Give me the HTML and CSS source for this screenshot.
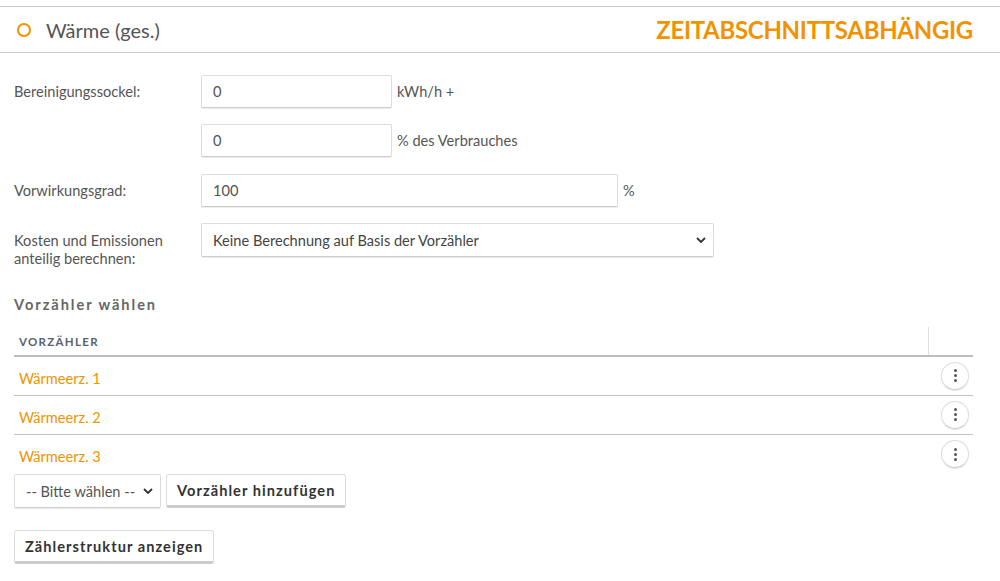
FILE: index.html
```html
<!DOCTYPE html>
<html lang="de">
<head>
<meta charset="utf-8">
<link rel="stylesheet" href="styles.css">
</head>
<body>
<div class="panel">
  <div class="panel-head">
    <div class="title">
      <span class="ring"></span>
      <span class="title-text">Wärme (ges.)</span>
    </div>
    <div class="mode">ZEITABSCHNITTSABHÄNGIG</div>
  </div>

  <div class="form">
    <div class="row">
      <label class="lbl">Bereinigungssockel:</label>
      <div class="ctrl"><input class="inp w-short" value="0"><span class="unit">kWh/h +</span></div>
    </div>
    <div class="row">
      <label class="lbl"></label>
      <div class="ctrl"><input class="inp w-short" value="0"><span class="unit">% des Verbrauches</span></div>
    </div>
    <div class="row">
      <label class="lbl">Vorwirkungsgrad:</label>
      <div class="ctrl"><input class="inp w-mid" value="100"><span class="unit">%</span></div>
    </div>
    <div class="row row-top">
      <label class="lbl lbl-multi">Kosten und Emissionen anteilig berechnen:</label>
      <div class="ctrl">
        <div class="sel w-long"><span>Keine Berechnung auf Basis der Vorzähler</span><svg class="chev" viewBox="0 0 10 6"><path d="M1 1l4 4 4-4" fill="none" stroke="#333" stroke-width="1.8"/></svg></div>
      </div>
    </div>
  </div>

  <h3 class="section">Vorzähler wählen</h3>

  <div class="table">
    <div class="thead">
      <div class="th">VORZÄHLER</div>
      <div class="th th-act"></div>
    </div>
    <div class="tr"><a class="meter">Wärmeerz. 1</a><span class="kebab"><i></i><i></i><i></i></span></div>
    <div class="tr"><a class="meter">Wärmeerz. 2</a><span class="kebab"><i></i><i></i><i></i></span></div>
    <div class="tr last"><a class="meter">Wärmeerz. 3</a><span class="kebab"><i></i><i></i><i></i></span></div>
  </div>

  <div class="add">
    <div class="sel sel-small"><span>-- Bitte wählen --</span><svg class="chev" viewBox="0 0 10 6"><path d="M1 1l4 4 4-4" fill="none" stroke="#333" stroke-width="1.8"/></svg></div>
    <button class="btn">Vorzähler hinzufügen</button>
  </div>

  <div class="struct">
    <button class="btn">Zählerstruktur anzeigen</button>
  </div>
</div>
</body>
</html>
```

FILE: styles.css
```css
* { box-sizing: border-box; }
body {
  margin: 0;
  font-family: Lato, "Open Sans", sans-serif;
  font-size: 14.6px;
  color: #555;
  background: #fff;
}
.panel { padding-top: 6px; }
.panel-head {
  height: 47px;
  border-top: 1px solid #c8c8c8;
  border-bottom: 1px solid #c8c8c8;
  display: flex;
  align-items: center;
  justify-content: space-between;
  padding: 0 27px 0 17px;
}
.title { display: flex; align-items: center; gap: 15px; }
.ring {
  width: 14px; height: 14px;
  border: 2.4px solid #f39200;
  border-radius: 50%;
}
.title-text { font-size: 20px; color: #555; }
.mode {
  font-size: 24px;
  font-weight: 700;
  color: #f39200;
  letter-spacing: -0.3px;
}
.form { padding: 22px 14px 0; display: flex; flex-direction: column; gap: 16.4px; }
.row { display: flex; align-items: center; }
.row-top { align-items: flex-start; }
.lbl { width: 187px; flex: none; }
.lbl-multi { line-height: 18px; padding-top: 9px; padding-right: 20px; }
.ctrl { display: flex; align-items: center; }
.inp {
  height: 33px;
  border: 1px solid #ddd;
  border-bottom-color: #ccc;
  box-shadow: 0 1px 1px rgba(0,0,0,0.08);
  border-radius: 2px;
  padding: 0 11px;
  font: inherit;
  color: #555;
}
.w-short { width: 191px; }
.w-mid { width: 417px; }
.w-long { width: 513px; }
.unit { margin-left: 5px; }
.sel {
  height: 34px;
  border: 1px solid #ddd;
  border-bottom-color: #ccc;
  box-shadow: 0 1px 1px rgba(0,0,0,0.08);
  border-radius: 2px;
  padding: 0 7px 0 11px;
  display: flex;
  align-items: center;
  justify-content: space-between;
  color: #444;
}
.chev { width: 10px; height: 6px; }
.section {
  margin: 28px 14px 0;
  font-size: 14.6px;
  font-weight: 700;
  letter-spacing: 1.95px;
  color: #666;
}
.table { margin: 14px 27px 0 14px; }
.thead {
  display: flex;
  height: 30px;
  border-bottom: 2px solid #bdbdbd;
}
.th {
  flex: 1;
  font-size: 11.5px;
  font-weight: 700;
  letter-spacing: 1.3px;
  color: #5a6270;
  padding: 8px 5px 0;
}
.th-act { flex: none; width: 45px; border-left: 1px solid #e0e0e0; }
.tr {
  display: flex;
  align-items: center;
  justify-content: space-between;
  height: 39px;
  border-bottom: 1px solid #c4c4c4;
  padding: 0 5px;
}
.tr.last { border-bottom: none; }
.meter { color: #f39200; padding-top: 4px; }
.kebab {
  width: 28px; height: 28px;
  border: 1px solid #ddd;
  border-bottom-color: #ccc;
  border-radius: 50%;
  box-shadow: 0 1px 1px rgba(0,0,0,0.1);
  display: flex;
  flex-direction: column;
  align-items: center;
  justify-content: center;
  gap: 2px;
  margin-right: -1px;
  margin-top: -1px;
}
.kebab i { width: 3px; height: 3px; border-radius: 50%; background: #555; }
.add { display: flex; gap: 5px; padding: 0 14px; }
.sel-small { width: 147px; height: 34px; color: #555; }
.btn {
  height: 34px;
  border: 1px solid #ddd;
  border-bottom: 3px solid #ccc;
  border-radius: 3px;
  background: #fff;
  font: inherit;
  font-weight: 700;
  letter-spacing: 1.05px;
  color: #333;
  padding: 0 10px;
}
.struct { padding: 22px 14px 0; }
```
